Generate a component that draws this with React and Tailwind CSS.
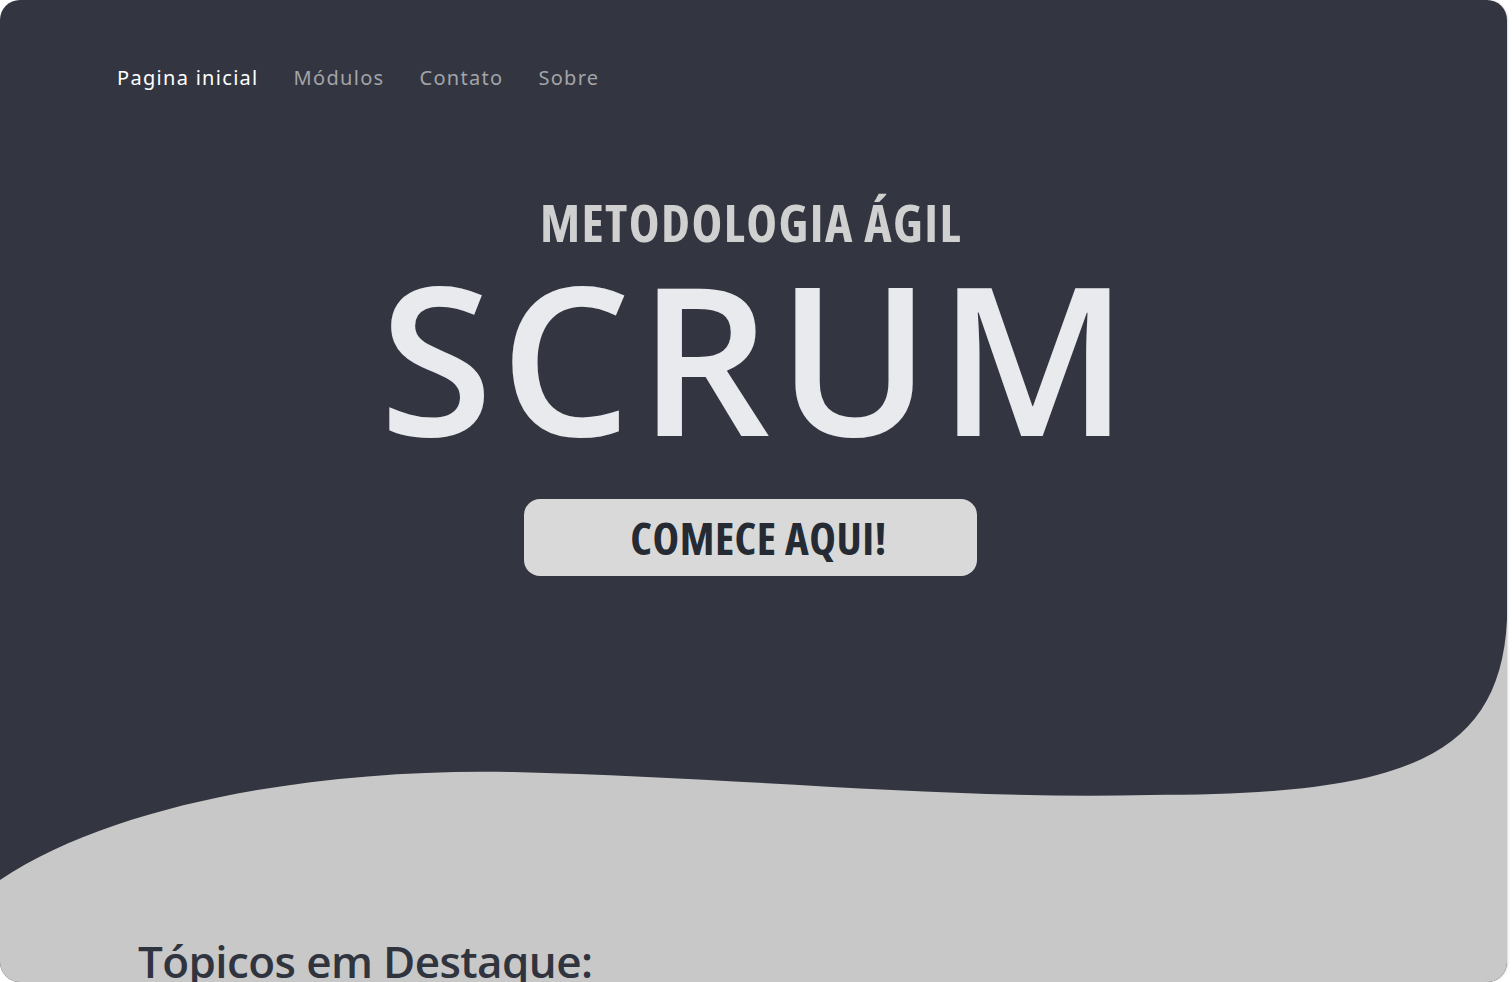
export default function App() {
  const navItems = ["Pagina inicial", "Módulos", "Contato", "Sobre"];

  return (
    <div className="w-full h-[982px] bg-white overflow-hidden">
      <div className="relative w-[1507px] h-[982px] rounded-[20px] overflow-hidden bg-[#333640] shadow-[1px_0_2px_rgba(0,0,0,0.15)]">
        {/* Wave background */}
        <svg
          className="absolute inset-0 w-full h-full"
          viewBox="0 0 1507 982"
          preserveAspectRatio="none"
        >
          <path
            d="M0,880 C120,800 330,768 513,772 C750,778 950,800 1150,795 C1400,795 1500,760 1507,620 L1507,982 L0,982 Z"
            fill="#c8c8c8"
          />
        </svg>

        {/* Navigation */}
        <nav className="relative flex gap-[35px] pl-[117px] pt-[63px] text-[20px] leading-[30px] tracking-[1.3px] font-['Noto_Sans',sans-serif]">
          {navItems.map((item, i) => (
            <a
              key={item}
              href="#"
              className={i === 0 ? "text-white" : "text-[#a3a4a9]"}
            >
              {item}
            </a>
          ))}
        </nav>

        {/* Hero */}
        <section className="relative flex flex-col items-center mt-[103px] pr-[6px]">
          <h2 className="text-[52px] leading-none font-bold tracking-[1.4px] pl-[1px] text-[#d0d0d0] font-['Open_Sans',sans-serif] [font-stretch:75%]">
            METODOLOGIA ÁGIL
          </h2>
          <h1 className="text-[207px] leading-none font-semibold tracking-[7px] pl-[14px] text-[#e9eaee] font-['Open_Sans',sans-serif] mt-[5px]">
            SCRUM
          </h1>
          <button className="mt-[39px] w-[453px] h-[77px] rounded-[16px] bg-[#d9d9d9] text-[#252a33] text-[45px] font-bold tracking-[0.5px] font-['Open_Sans',sans-serif] [font-stretch:75%] pl-[16px]">
            COMECE AQUI!
          </button>
        </section>

        {/* Topics */}
        <section className="relative pl-[138px] mt-[363px]">
          <h3 className="text-[44px] leading-none font-semibold tracking-[-0.6px] text-[#30343e] font-['Open_Sans',sans-serif]">
            Tópicos em Destaque:
          </h3>
        </section>
      </div>
    </div>
  );
}
